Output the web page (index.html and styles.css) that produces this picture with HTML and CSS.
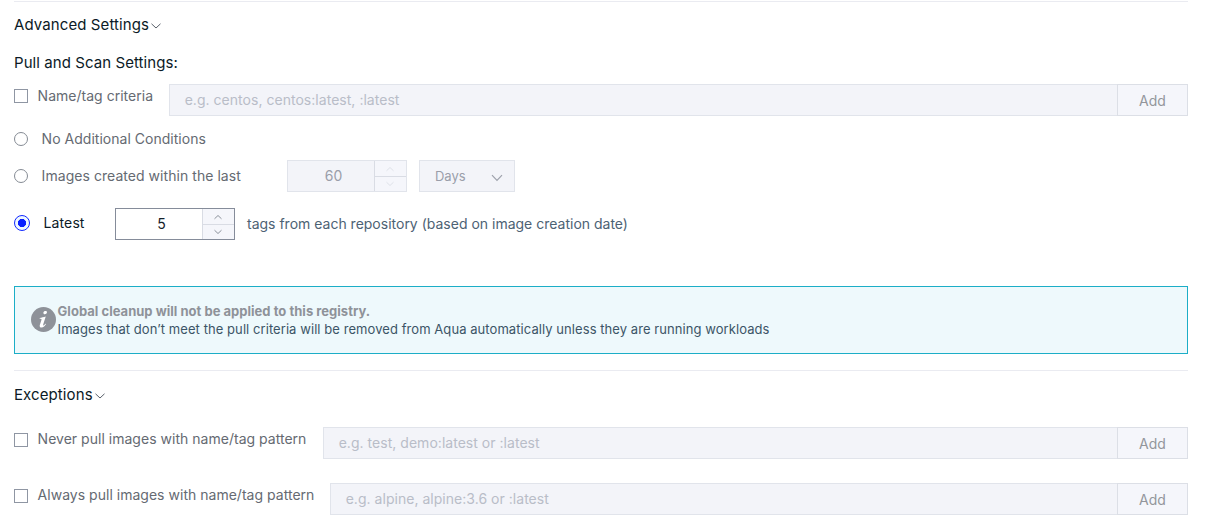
FILE: index.html
```html
<!DOCTYPE html>
<html lang="en">
<head>
<meta charset="utf-8">
<title>Registry settings</title>
<link rel="stylesheet" href="styles.css">
</head>
<body>
<main class="page">
  <section class="advanced">
    <h2 class="heading"><span>Advanced Settings</span><svg class="caret" viewBox="0 0 10 6"><path d="M.5 .8 5 5 9.5 .8"/></svg></h2>
    <h3 class="subheading"><span>Pull and Scan Settings:</span></h3>
    <div class="row criteria">
      <span class="checkbox"></span>
      <span class="label label-name">Name/tag criteria</span>
      <div class="field"><span class="placeholder">e.g. centos, centos:latest, :latest</span></div>
      <div class="add"><span>Add</span></div>
    </div>
    <div class="row none">
      <span class="radio"></span>
      <span class="label radio-label label-none">No Additional Conditions</span>
    </div>
    <div class="row created">
      <span class="radio"></span>
      <span class="label radio-label label-created">Images created within the last</span>
      <div class="number disabled">
        <span class="value">60</span>
        <div class="steps">
          <svg viewBox="0 0 10 6"><path d="M1.5 4.8 5 1.5 8.5 4.8"/></svg>
          <svg viewBox="0 0 10 6"><path d="M1.5 1.2 5 4.5 8.5 1.2"/></svg>
        </div>
      </div>
      <div class="select"><span>Days</span><svg viewBox="0 0 12 8"><path d="M1 1.2 6 6.4 11 1.2"/></svg></div>
    </div>
    <div class="row latest">
      <span class="radio checked"></span>
      <span class="label label-latest">Latest</span>
      <div class="number">
        <span class="value">5</span>
        <div class="steps">
          <svg viewBox="0 0 10 6"><path d="M1.5 4.8 5 1.5 8.5 4.8"/></svg>
          <svg viewBox="0 0 10 6"><path d="M1.5 1.2 5 4.5 8.5 1.2"/></svg>
        </div>
      </div>
      <span class="suffix">tags from each repository (based on image creation date)</span>
    </div>
    <div class="notice">
      <svg class="info" viewBox="0 0 25 25"><circle cx="12.5" cy="12.5" r="12.5"/><path transform="translate(-1.600 -1.700) scale(1.12)" d="M13.3 5.3c1-.6 2.500-.3 2.400 1-.1 1.600-2.200 2.200-3 1.200-.5-.8-.1-1.800.6-2.200zM9.200 11.300c1.700-.2 3.500-1 5.400-1.400l-2.300 7.300c-.2.800.2 1 .7.600.5-.4.900-.9 1.300-1.400l.6.400c-1 1.700-2.400 3.100-4.100 3.100-1.400 0-1.900-.9-1.500-2.300l1.500-4.800c.2-.7-.2-.9-1.600-.9z"/></svg>
      <div class="notice-body">
        <div class="notice-title"><span>Global cleanup will not be applied to this registry.</span></div>
        <div class="notice-text"><span>Images that don’t meet the pull criteria will be removed from Aqua automatically unless they are running workloads</span></div>
      </div>
    </div>
  </section>
  <section class="exceptions">
    <h2 class="heading"><span>Exceptions</span><svg class="caret" viewBox="0 0 10 6"><path d="M.5 .8 5 5 9.5 .8"/></svg></h2>
    <div class="row never">
      <span class="checkbox"></span>
      <span class="label label-never">Never pull images with name/tag pattern</span>
      <div class="field"><span class="placeholder">e.g. test, demo:latest or :latest</span></div>
      <div class="add"><span>Add</span></div>
    </div>
    <div class="row always">
      <span class="checkbox"></span>
      <span class="label label-always">Always pull images with name/tag pattern</span>
      <div class="field"><span class="placeholder">e.g. alpine, alpine:3.6 or :latest</span></div>
      <div class="add"><span>Add</span></div>
    </div>
  </section>
</main>
</body>
</html>
```
FILE: styles.css
```css
* { box-sizing: border-box; }
body { margin: 0; background: #fff; overflow: hidden; font: 14px/20px Inter, "Liberation Sans", sans-serif; color: #656a72; white-space: nowrap; }
svg { display: block; flex: none; fill: none; stroke: #8c929b; stroke-width: 1; }
.page { padding: 1px 26px 0 14px; }
.advanced, .exceptions { border-top: 1px solid #eaebf1; }
.advanced { height: 369px; }
.heading, .subheading { display: flex; align-items: center; margin: 0; height: 20px; font-size: 15px; font-weight: 400; color: #0b1a26; letter-spacing: .1px; }
.heading { margin-top: 13px; }
.exceptions .heading { margin-top: 14px; }
.subheading { margin-top: 18px; letter-spacing: .07px; }
.caret { width: 10px; height: 6px; margin: 1px 0 0 1.5px; stroke: #59606a; }
.exceptions .caret { margin-left: 2.5px; }
.row { display: flex; align-items: flex-start; height: 32px; }
.criteria { margin-top: 11px; }
.checkbox { flex: none; width: 14px; height: 14px; margin: 5px 9.6px 0 0; border: 1px solid #8f96a3; }
.exceptions .checkbox { margin-top: 6px; }
.label { flex: none; margin-top: 2px; letter-spacing: .02px; }
.label-name { width: 131.4px; }
.field { flex: 1; height: 32px; padding: 5px 14.7px; border: 1px solid #e1e4eb; border-right: 0; background: #f3f4f9; color: #b9bdc8; letter-spacing: .03px; }
.add { width: 71px; height: 32px; padding-top: 6px; border: 1px solid #dcdfe6; background: #f5f6fb; text-align: center; color: #93969c; }
.radio { flex: none; width: 14px; height: 14px; border: 1px solid #858b94; border-radius: 50%; }
.radio-label { margin: -3px 0 0 13.6px; }
.none { height: 14px; margin-top: 16px; }
.created { margin-top: 14px; }
.created .radio { margin-top: 9px; }
.label-created { width: 245.4px; margin: 6px 0 0 13.6px; letter-spacing: .05px; }
.number { display: flex; flex: none; width: 120px; height: 32px; border: 1px solid #858c9a; color: #15202b; }
.value { flex: 1; padding: 5px 0 0 5px; text-align: center; }
.steps { display: flex; flex-direction: column; width: 32px; border-left: 1px solid #d9dce4; background: linear-gradient(#d9dce4, #d9dce4) 0 15px / 100% 1px no-repeat #f5f6fb; }
.steps svg { width: 10px; height: 6px; margin: 5px auto 4px; }
.steps svg + svg { margin-top: 5px; }
.disabled { border-color: #e1e4eb; background: #f3f4f9; color: #9a9eaa; }
.disabled svg { stroke: #dfe2e9; }
.select { display: flex; align-items: center; justify-content: space-between; width: 96px; height: 32px; margin-left: 12px; padding: 0 11px 0 15px; border: 1px solid #e1e4eb; background: #f3f4f9; color: #9a9eaa; font-size: 13px; }
.select svg { width: 12px; height: 8px; margin-top: 3px; stroke: #9ea2ac; stroke-width: 1.2; }
.latest { margin-top: 16px; }
.checked { width: 16px; height: 16px; margin-top: 7px; border-color: #1128ff; background: radial-gradient(circle, #0820ff 0 3.8px, #eef8ff 4.4px); }
.label-latest { width: 71.4px; margin: 5px 0 0 13.6px; color: #0b1a26; letter-spacing: .1px; }
.suffix { margin: 6px 0 0 12px; color: #4d6274; }
.notice { display: flex; height: 68px; margin-top: 46px; padding: 16px 16px 0; border: 1px solid #1caec7; background: #eef9fc; color: #3c5567; font-size: 13px; line-height: 18px; }
.info { width: 25px; height: 25px; margin: 4px 1.6px 0 0; stroke: none; fill: #8e9299; }
.info path { fill: #fff; }
.notice-body { margin-top: -1px; }
.notice-title { font-weight: 700; color: #8e9299; letter-spacing: .02px; }
.notice-text { letter-spacing: .067px; }
.never { margin-top: 22px; }
.label-never { width: 285.4px; }
.always { margin-top: 24px; }
.label-always { width: 292.4px; }
```
